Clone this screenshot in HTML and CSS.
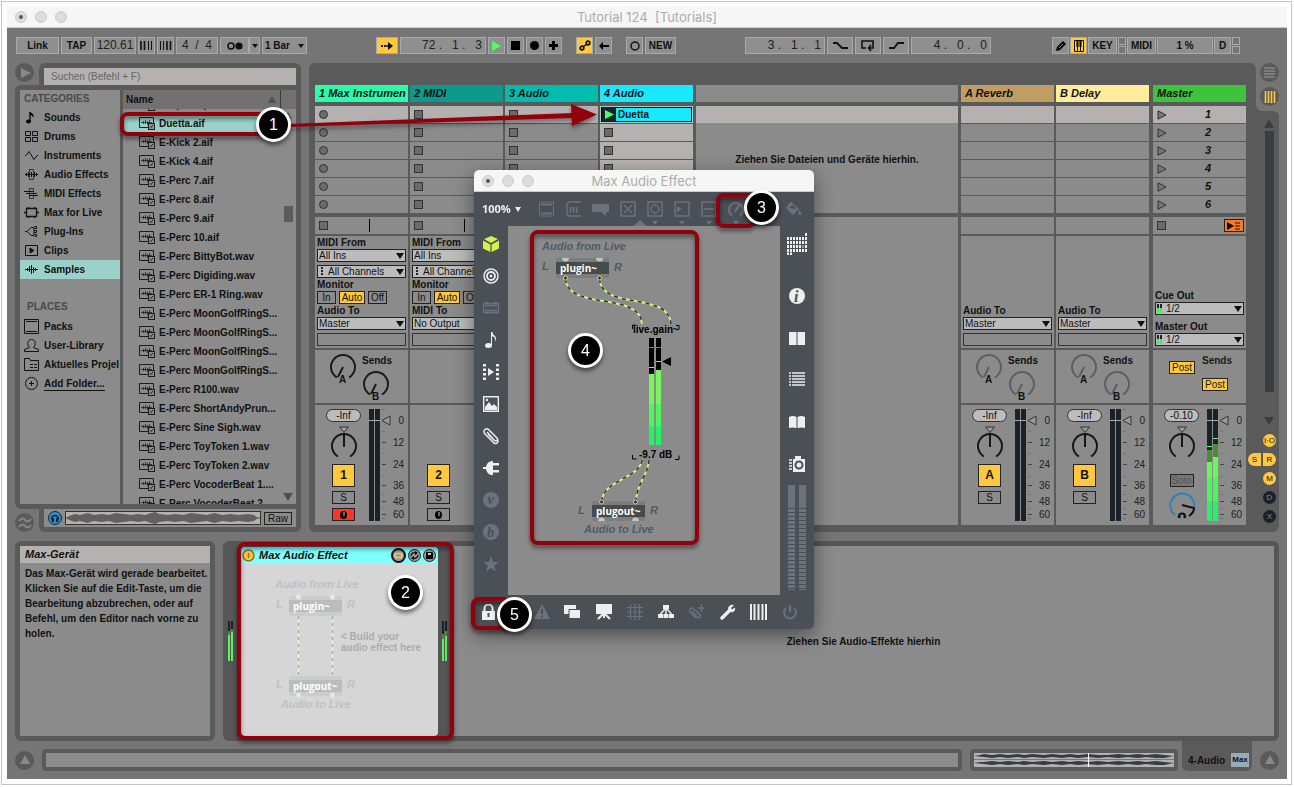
FILE: index.html
```html
<!DOCTYPE html>
<html lang="de">
<head>
<meta charset="utf-8">
<title>Tutorial 124 [Tutorials]</title>
<link rel="stylesheet" href="styles.css">
</head>
<body>
<svg class="defs" aria-hidden="true">
  <symbol id="file" viewBox="0 0 16 13"><path d="M9 10.500H.5V.5h14V6" fill="none" stroke="#1c1c1c"/><path d="M2 5.500h11M4.500 4v3M6.500 3v4M8.500 4v4M10.500 3v3" fill="none" stroke="#1c1c1c" stroke-opacity=".75"/><rect x="9.500" y="6.500" width="6" height="6" fill="#8b8b8b" fill-opacity=".8" stroke="#1c1c1c"/><path d="M11 9.500l1 1 2-2.500" fill="none" stroke="#1c1c1c"/></symbol>
  <symbol id="sends" viewBox="0 0 93 53"><g fill="none" stroke="currentColor" stroke-width="2"><path d="M22 27.500A12 12 0 1 1 34 27.500M28 17l-5 10M55 44.500A12 12 0 1 1 67 44.500M61 34l-5 10"/></g><g class="svg-label"><text x="24" y="33">A</text><text x="57" y="50">B</text><text x="47" y="14">Sends</text></g></symbol>
  <symbol id="pan" viewBox="0 0 30 34"><path d="M10.500 1h9L15 6.500z" fill="#999" stroke="#333"/><path d="M9 30.500a12 12 0 1 1 12 0M15 8v13" fill="none" stroke="#161616" stroke-width="2"/></symbol>
  <symbol id="scale" viewBox="0 0 38 112"><path d="M0 0h5v112H0zM6 0h5v112H6z" fill="#1a2128"/><path d="M0 11.500h11" stroke="#aaa"/><path d="M13 11.500l8-4.500v9z" fill="#999" stroke="#333"/><path d="M13 33.500h4M13 55.500h4M13 76.500h4M13 92.500h4M13 105.500h4" stroke="#444"/><path d="M13 .5h3M13 22.500h3M13 44.500h3M13 67.500h3M13 85.500h3M13 99.500h3M13 109.500h3" stroke="#707070"/><g class="scale-text" text-anchor="end"><text x="35" y="15">0</text><text x="35" y="37">12</text><text x="35" y="59">24</text><text x="35" y="80">36</text><text x="35" y="96">48</text><text x="35" y="109">60</text></g></symbol>
  <symbol id="scene" viewBox="0 0 10 10"><path d="M1 .8L9 5 1 9.200z" fill="#777" stroke="#333"/></symbol>
</svg>
<div class="page">
<div class="stage">
<div class="window">
  <header class="titlebar"><span class="dots"><i class="dot edited"></i><i class="dot"></i><i class="dot"></i></span><span>Tutorial 124 &nbsp;[Tutorials]</span></header>

  <div class="toolbar">
    <div class="group">
      <button class="tb w43">Link</button><button class="tb w31">TAP</button><button class="tb w42 num">120.61</button>
      <button class="tb w17"><svg width="13" height="9"><path d="M1 0v9M4.500 0v9" stroke="#111" stroke-width="1.600"/><path d="M8.500 0v9M11.500 0v9" stroke="#111"/></svg></button>
      <button class="tb w17"><svg width="13" height="9"><path d="M1.500 0v9M4.500 0v9" stroke="#111"/><path d="M8 0v9M11.500 0v9" stroke="#111" stroke-width="1.600"/></svg></button>
      <button class="tb w42 num">4 &nbsp;/ &nbsp;4</button>
      <span class="pair"><button class="tb w29"><svg width="16" height="8"><circle cx="4" cy="4" r="3" fill="none" stroke="#111" stroke-width="1.500"/><circle cx="12" cy="4" r="3.600" fill="#111"/></svg></button><button class="tb w11"><i class="down"></i></button></span>
      <button class="tb w45">1 Bar <i class="down"></i></button>
    </div>
    <div class="group">
      <button class="tb w22 on"><svg width="12" height="8"><path d="M0 3h2v2H0zM3 3h1v2H3zM7 0l5 4-5 4z" fill="#111"/><path d="M4 4h4" stroke="#111" stroke-width="1.500"/></svg></button>
      <button class="tb w86 num right">72 . &nbsp; 1 . &nbsp; 3</button>
      <button class="tb w17"><svg width="9" height="10"><path d="M0 0l9 5-9 5z" fill="#4dff6a"/></svg></button>
      <button class="tb w17"><svg width="9" height="9"><path d="M0 0h9v9H0z"/></svg></button>
      <button class="tb w17"><svg width="9" height="9"><circle cx="4.500" cy="4.500" r="4.500"/></svg></button>
      <button class="tb w17"><svg width="9" height="9"><path d="M3 0h3v3h3v3H6v3H3V6H0V3h3z"/></svg></button>
      <span class="spacer"></span>
      <button class="tb w17 on"><svg width="12" height="11"><g fill="none" stroke="#111" stroke-width="1.700"><circle cx="3" cy="8" r="1.800"/><circle cx="9" cy="3" r="1.800"/></g><path d="M4.500 6.500l3-2" stroke="#111" stroke-width="1.500"/></svg></button>
      <button class="tb w17"><svg width="10" height="8"><path d="M0 4l4-4v3h6v2H4v3z"/></svg></button>
      <span class="spacer"></span>
      <button class="tb w17"><svg width="10" height="10"><circle cx="5" cy="5" r="4" fill="none" stroke="#111" stroke-width="1.500"/></svg></button>
      <button class="tb w31">NEW</button>
    </div>
    <div class="group">
      <button class="tb w80 num right">3 . &nbsp; 1 . &nbsp; 1</button>
      <button class="tb w26"><svg width="15" height="7"><path d="M0 1h4l5 5h6" fill="none" stroke="#111" stroke-width="1.800"/></svg></button>
      <button class="tb w26"><svg width="14" height="12"><path d="M5 8H1V1h11v7H8M10 5L7.500 8l2.500 3" fill="none" stroke="#111" stroke-width="1.600"/></svg></button>
      <button class="tb w26"><svg width="15" height="7"><path d="M0 6h5l4-5h6" fill="none" stroke="#111" stroke-width="1.800"/></svg></button>
      <button class="tb w80 num right">4 . &nbsp; 0 . &nbsp; 0</button>
    </div>
    <div class="group tight">
      <button class="tb w17"><svg width="10" height="10"><path d="M0 10l1-4 6-6 3 3-6 6z"/><path d="M3 7l4-4" stroke="#999"/></svg></button>
      <button class="tb w17 on"><svg width="10" height="12"><path d="M.5.5h9v11h-9zM3.500 6v5M6.500 6v5" fill="none" stroke="#111"/><path d="M2.500 0h2v7h-2zM5.500 0h2v7h-2z"/></svg></button>
      <button class="tb w29">KEY</button><span class="leds"><i></i><i></i></span>
      <button class="tb w29">MIDI</button><button class="tb w56">1 %</button><button class="tb w17">D</button><span class="leds"><i></i><i></i></span>
    </div>
  </div>

  <main class="main">
    <section class="browser">
      <button class="round"><svg width="12" height="12"><path d="M2 1l10 5-10 5z" fill="#888"/></svg></button>
      <div class="search"><input type="text" aria-label="Suchen" placeholder="Suchen (Befehl + F)"></div>
      <div class="panes">
        <nav class="places">
          <h2>CATEGORIES</h2>
          <a href="#"><svg width="15" height="15"><path d="M6 2v9" stroke="#111" stroke-width="1.500"/><ellipse cx="4.500" cy="11.500" rx="2.500" ry="2"/><path d="M6 1c1 3 5 2 3 7 0-3-3-3-3-4z"/></svg>Sounds</a>
          <a href="#"><svg width="15" height="13" fill="none" stroke="#111"><path d="M1.500 1.500h5v4h-5zM8.500 1.500h5v4h-5zM1.500 7.500h5v4h-5zM8.500 7.500h5v4h-5z"/></svg>Drums</a>
          <a href="#"><svg width="15" height="13" fill="none" stroke="#111"><path d="M1 6.500h1l3-4 5 8 3-4h1"/></svg>Instruments</a>
          <a href="#"><svg width="15" height="13" fill="none" stroke="#111"><path d="M1 6.500h13M2.500 5v3M4.500 4v5M7.500 4v5M10.500 4v5M12.500 5v3"/><path d="M5.500 1.500h4v10h-4z" stroke-opacity=".7"/></svg>Audio Effects</a>
          <a href="#"><svg width="15" height="13" fill="none" stroke="#111"><path d="M0 4.500h9M2 6.500h11M5 8.500h9"/><path d="M5.500 1.500h4v10h-4z" stroke-opacity=".7"/></svg>MIDI Effects</a>
          <a href="#"><svg width="15" height="13" fill="none" stroke="#111" stroke-width="1.300"><path d="M2.500 2.500h10v8h-10zM0 6.500h2M13 6.500h2M4.500 1v1M10.500 1v1M4.500 11v1M10.500 11v1"/></svg>Max for Live</a>
          <a href="#"><svg width="15" height="13" fill="none" stroke="#111"><path d="M1 6.500h2l4-4h3v8H7l-4-4M10.500 1.500h2v2h-2M10.500 5.500h2v2h-2M10.500 9.500h2v2h-2"/></svg>Plug-Ins</a>
          <a href="#"><svg width="15" height="13" fill="none" stroke="#111"><path d="M1.500 1.500h12v10h-12z"/><path d="M6 4l4 2.500L6 9z" fill="#111"/></svg>Clips</a>
          <a href="#" class="current"><svg width="15" height="13" fill="none" stroke="#111"><path d="M1 6.500h13M3.500 5v3M5.500 3v6M7.500 2v9M9.500 4v6M11.500 5v3"/></svg>Samples</a>
          <h2 class="second">PLACES</h2>
          <a href="#"><svg width="15" height="15" fill="none" stroke="#111"><path d="M.5.5h14v14H.5zM2 2.500h11M2 12.500h11"/></svg>Packs</a>
          <a href="#"><svg width="15" height="15" fill="none" stroke="#111"><path d="M.5 13.500v-2l5-2c-3-3-2-8 2-8s5 5 2 8l5 2v2z"/></svg>User-Library</a>
          <a href="#"><svg width="15" height="13" fill="none" stroke="#111"><path d="M.5 12.500V.5h5l1 2h8v10zM6 6.500h3M10 6.500h3M6 9.500h3M10 9.500h3"/></svg>Aktuelles Projel</a>
          <a href="#"><svg width="15" height="15" fill="none" stroke="#111"><circle cx="7.500" cy="7.500" r="6"/><path d="M5 7.500h5M7.500 5v5"/></svg><span class="link">Add Folder...</span></a>
        </nav>
        <div class="files">
          <div class="files-head"><span>Name</span><i class="up"></i><b></b></div>
          <div class="files-body">
            <ul>
              <li><svg width="16" height="13"><use href="#file"/></svg>Drop Loop.aif</li>
              <li class="current"><svg width="16" height="13"><use href="#file"/></svg>Duetta.aif</li>
              <li><svg width="16" height="13"><use href="#file"/></svg>E-Kick 2.aif</li>
              <li><svg width="16" height="13"><use href="#file"/></svg>E-Kick 4.aif</li>
              <li><svg width="16" height="13"><use href="#file"/></svg>E-Perc 7.aif</li>
              <li><svg width="16" height="13"><use href="#file"/></svg>E-Perc 8.aif</li>
              <li><svg width="16" height="13"><use href="#file"/></svg>E-Perc 9.aif</li>
              <li><svg width="16" height="13"><use href="#file"/></svg>E-Perc 10.aif</li>
              <li><svg width="16" height="13"><use href="#file"/></svg>E-Perc BittyBot.wav</li>
              <li><svg width="16" height="13"><use href="#file"/></svg>E-Perc Digiding.wav</li>
              <li><svg width="16" height="13"><use href="#file"/></svg>E-Perc ER-1 Ring.wav</li>
              <li><svg width="16" height="13"><use href="#file"/></svg>E-Perc MoonGolfRingS...</li>
              <li><svg width="16" height="13"><use href="#file"/></svg>E-Perc MoonGolfRingS...</li>
              <li><svg width="16" height="13"><use href="#file"/></svg>E-Perc MoonGolfRingS...</li>
              <li><svg width="16" height="13"><use href="#file"/></svg>E-Perc MoonGolfRingS...</li>
              <li><svg width="16" height="13"><use href="#file"/></svg>E-Perc R100.wav</li>
              <li><svg width="16" height="13"><use href="#file"/></svg>E-Perc ShortAndyPrun...</li>
              <li><svg width="16" height="13"><use href="#file"/></svg>E-Perc Sine Sigh.wav</li>
              <li><svg width="16" height="13"><use href="#file"/></svg>E-Perc ToyToken 1.wav</li>
              <li><svg width="16" height="13"><use href="#file"/></svg>E-Perc ToyToken 2.wav</li>
              <li><svg width="16" height="13"><use href="#file"/></svg>E-Perc VocoderBeat 1....</li>
              <li><svg width="16" height="13"><use href="#file"/></svg>E-Perc VocoderBeat 2....</li>
            </ul>
            <div class="scroll"><i class="up"></i><b></b><i class="down big"></i></div>
          </div>
        </div>
      </div>
      <button class="round bottom"><svg width="14" height="12" fill="none" stroke="#888" stroke-width="2"><path d="M1 4c2-3 4-3 6-1s4 2 6-1M1 10c2-3 4-3 6-1s4 2 6-1"/></svg></button>
      <div class="preview">
        <svg width="14" height="14"><circle cx="7" cy="7" r="6.500" fill="#2b8fc9" stroke="#1b2733"/><path d="M3.500 8a3.500 3.500 0 1 1 7 0" fill="none" stroke="#10202c" stroke-width="1.500"/><path d="M3 7h3v4H4zM8 7h3l-1 4H8z" fill="#10202c"/></svg>
        <div class="wave"><svg viewBox="0 0 196 12" preserveAspectRatio="none"><path d="M0 6h196" stroke="#555"/><path d="M0 6L3 4 9 2 14 3 22 1 28 3 36 2 44 3 50 1 58 2 66 3 73 2 80 3 86 1 90 0 94 2 103 3 110 2 119 3 126 1 134 2 142 3 150 1 158 3 166 2 174 3 184 2 190 3 194 6 190 9 184 10 174 9 166 10 158 9 150 11 142 9 134 10 126 11 119 9 110 10 103 9 94 10 90 12 86 11 80 9 73 10 66 9 58 10 50 11 44 9 36 10 28 9 22 11 14 9 9 10 3 8z" fill="#606060"/></svg></div>
        <button class="outline raw">Raw</button>
      </div>
    </section>

    <section class="session">
      <div class="tracks">
        <article class="track">
          <h3 class="c-green">1 Max Instrumen</h3>
          <div class="slots"><button class="slot lit"><i class="rec"></i></button><button class="slot"><i class="rec"></i></button><button class="slot"><i class="rec"></i></button><button class="slot"><i class="rec"></i></button><button class="slot"><i class="rec"></i></button><button class="slot"><i class="rec"></i></button></div>
          <div class="stop"><i class="sq"></i><i class="tick"></i></div>
          <div class="io">
            <label for="t1from">MIDI From</label><span class="sel"><select id="t1from"><option>All Ins</option></select></span>
            <span class="sel chan"><select aria-label="Kanal 1"><option>All Channels</option></select></span>
            <span class="cap">Monitor</span><div class="mon"><button class="outline w19">In</button><button class="outline w26 on">Auto</button><button class="outline w19">Off</button></div>
            <label for="t1to">Audio To</label><span class="sel"><select id="t1to"><option>Master</option></select></span><span class="blank"></span>
          </div>
          <div class="sends"><svg width="93" height="53"><use href="#sends"/></svg></div>
          <div class="mixer"><div class="strip"><span class="pill">-Inf</span><svg width="30" height="34"><use href="#pan"/></svg><button class="act on">1</button><button class="outline w23">S</button><button class="outline w23 armed"><svg width="7" height="8"><ellipse cx="3.500" cy="4" rx="3.500" ry="4"/><path d="M4 1v4" stroke="#ccc"/></svg></button></div><svg width="38" height="112"><use href="#scale"/></svg></div>
        </article>
        <article class="track">
          <h3 class="c-teal">2 MIDI</h3>
          <div class="slots"><button class="slot lit"><i class="sq"></i></button><button class="slot"><i class="sq"></i></button><button class="slot"><i class="sq"></i></button><button class="slot"><i class="sq"></i></button><button class="slot"><i class="sq"></i></button><button class="slot"><i class="sq"></i></button></div>
          <div class="stop"><i class="sq"></i><i class="tick"></i></div>
          <div class="io">
            <label for="t2from">MIDI From</label><span class="sel"><select id="t2from"><option>All Ins</option></select></span>
            <span class="sel chan"><select aria-label="Kanal 2"><option>All Channels</option></select></span>
            <span class="cap">Monitor</span><div class="mon"><button class="outline w19">In</button><button class="outline w26 on">Auto</button><button class="outline w19">Off</button></div>
            <label for="t2to">MIDI To</label><span class="sel"><select id="t2to"><option>No Output</option></select></span><span class="blank"></span>
          </div>
          <div class="sends"></div>
          <div class="mixer"><div class="strip bare"><button class="act on">2</button><button class="outline w23">S</button><button class="outline w23"><svg width="7" height="8"><ellipse cx="3.500" cy="4" rx="3.500" ry="4"/><path d="M4 1v4" stroke="#ccc"/></svg></button></div></div>
        </article>
        <article class="track">
          <h3 class="c-aqua">3 Audio</h3>
          <div class="slots"><button class="slot lit"><i class="sq"></i></button><button class="slot"><i class="sq"></i></button><button class="slot"><i class="sq"></i></button><button class="slot"><i class="sq"></i></button><button class="slot"><i class="sq"></i></button><button class="slot"><i class="sq"></i></button></div>
          <div class="stop"><i class="sq"></i></div><div class="io"></div><div class="sends"></div><div class="mixer"></div>
        </article>
        <article class="track">
          <h3 class="c-cyan">4 Audio</h3>
          <div class="slots"><button class="slot clip"><span><svg width="9" height="9"><path d="M0 0l9 4.500L0 9z" fill="#4dff6a"/></svg></span>Duetta</button><button class="slot lit"><i class="sq"></i></button><button class="slot lit"><i class="sq"></i></button><button class="slot lit"><i class="sq"></i></button><button class="slot lit"><i class="sq"></i></button><button class="slot lit"><i class="sq"></i></button></div>
          <div class="stop"><i class="sq"></i></div><div class="io"></div><div class="sends"></div><div class="mixer"></div>
        </article>
        <div class="drop"><div class="drop-head"></div><div class="drop-lit"></div><div class="drop-mid">Ziehen Sie Dateien und Geräte hierhin.</div><div class="drop-rest"></div></div>
        <article class="track">
          <h3 class="c-tan">A Reverb</h3>
          <div class="slots"><div class="slot lit"></div><div class="slot"></div><div class="slot"></div><div class="slot"></div><div class="slot"></div><div class="slot"></div></div>
          <div class="stop"></div>
          <div class="io"><label for="ato">Audio To</label><span class="sel"><select id="ato"><option>Master</option></select></span><span class="blank"></span></div>
          <div class="sends dim"><svg width="93" height="53"><use href="#sends"/></svg></div>
          <div class="mixer"><div class="strip"><span class="pill">-Inf</span><svg width="30" height="34"><use href="#pan"/></svg><button class="act on">A</button><button class="outline w23">S</button></div><svg width="38" height="112"><use href="#scale"/></svg></div>
        </article>
        <article class="track">
          <h3 class="c-cream">B Delay</h3>
          <div class="slots"><div class="slot lit"></div><div class="slot"></div><div class="slot"></div><div class="slot"></div><div class="slot"></div><div class="slot"></div></div>
          <div class="stop"></div>
          <div class="io"><label for="bto">Audio To</label><span class="sel"><select id="bto"><option>Master</option></select></span><span class="blank"></span></div>
          <div class="sends dim"><svg width="93" height="53"><use href="#sends"/></svg></div>
          <div class="mixer"><div class="strip"><span class="pill">-Inf</span><svg width="30" height="34"><use href="#pan"/></svg><button class="act on">B</button><button class="outline w23">S</button></div><svg width="38" height="112"><use href="#scale"/></svg></div>
        </article>
        <article class="track master">
          <h3 class="c-master">Master</h3>
          <div class="slots"><button class="slot lit scene"><svg width="10" height="10"><use href="#scene"/></svg>1</button><button class="slot scene"><svg width="10" height="10"><use href="#scene"/></svg>2</button><button class="slot scene"><svg width="10" height="10"><use href="#scene"/></svg>3</button><button class="slot scene"><svg width="10" height="10"><use href="#scene"/></svg>4</button><button class="slot scene"><svg width="10" height="10"><use href="#scene"/></svg>5</button><button class="slot scene"><svg width="10" height="10"><use href="#scene"/></svg>6</button></div>
          <div class="stop"><i class="sq"></i><button class="back"><svg width="14" height="8"><path d="M0 0l7 4-7 4z"/><path d="M8 1h5M8 4h5M8 7h5" stroke="#111"/></svg></button></div>
          <div class="io wide">
            <label for="cue">Cue Out</label><span class="sel meter"><select id="cue"><option>1/2</option></select></span>
            <label for="mout">Master Out</label><span class="sel meter"><select id="mout"><option>1/2</option></select></span>
          </div>
          <div class="sends posts"><button class="outline w26 on">Post</button><div><span>Sends</span><button class="outline w26 on">Post</button></div></div>
          <div class="mixer"><div class="strip"><span class="pill">-0.10</span><svg width="30" height="34"><use href="#pan"/></svg><button class="outline solo">Solo</button><svg width="30" height="30"><path d="M8 24A12 12 0 1 1 27 17" fill="none" stroke="#2b83ba" stroke-width="2"/><path d="M15 14l12 3c0 4-2 6-5 8" fill="none" stroke="#111" stroke-width="2"/><path d="M12 27c-2-6 8-6 6 0M12.500 23v4M17.500 23v4" fill="none" stroke="#111" stroke-width="2"/></svg></div>
            <svg width="38" height="112"><use href="#scale"/><path d="M0 41h5v12H0zM6 35h5v13H6z" fill="#4f8a3a"/><path d="M0 53h5v15H0zM6 48h5v20H6z" fill="#6ef55c"/><path d="M0 68h5v24H0zM6 68h5v24H6z" fill="#49f85c"/><path d="M0 92h5v20H0zM6 92h5v20H6z" fill="#22f565"/><path d="M0 37.500h5M6 29.500h5" stroke="#5dff6a"/></svg></div>
        </article>
      </div>
    </section>
    <aside class="side">
      <div class="notch"><div>
        <button class="round"><svg width="11" height="11"><path d="M0 1h11M0 4h11M0 7h11M0 10h11" stroke="#888" stroke-width="1.500"/></svg></button>
        <button class="round"><svg width="12" height="12"><path d="M1.500 0v12M4.500 0v12M7.500 0v12M10.500 0v12" stroke="#ffc83e" stroke-width="1.600"/></svg></button>
      </div></div>
      <div class="rail">
        <i class="up dark"></i><b></b><i class="down big dark"></i>
        <div class="toggles"><button class="tog">I·O</button><span><button class="tog left">S</button><button class="tog rt">R</button></span><button class="tog">M</button><button class="tog off">D</button><button class="tog off">X</button></div>
      </div>
    </aside>
  </main>

  <section class="lower">
    <div class="info"><h2>Max-Gerät</h2><p>Das Max-Gerät wird gerade bearbeitet. Klicken Sie auf die Edit-Taste, um die Bearbeitung abzubrechen, oder auf Befehl, um den Editor nach vorne zu holen.</p></div>
    <div class="chain">
      <svg class="vu" width="5" height="40"><path d="M0 0h2v40H0zM3 0h2v40H3z" fill="#1a2128"/><path d="M0 10h2v6H0zM3 8h2v5H3z" fill="#4f8a3a"/><path d="M0 14h2v26H0zM3 11h2v29H3z" fill="#55f55e"/></svg>
      <div class="device">
        <header><svg width="13" height="13"><circle cx="6.500" cy="6.500" r="5.500" fill="#ffc83e" stroke="#9a6a20" stroke-width="1.500"/><path d="M6.500 4v5" stroke="#9a6a20" stroke-width="1.500"/></svg><h3>Max Audio Effect</h3>
          <button><svg width="15" height="15"><circle cx="7.500" cy="7.500" r="6.500" fill="#999" stroke="#111" stroke-width="2"/><path d="M4.500 5.500h6v4h-6zM3 7.500h1M11 7.500h1" fill="none" stroke="#ffc83e" stroke-width="1.400"/></svg></button>
          <button><svg width="13" height="13"><circle cx="6.500" cy="6.500" r="6" fill="#999" stroke="#222"/><path d="M3 7a3.500 3.500 0 0 1 5-3M10 6a3.500 3.500 0 0 1-5 3" fill="none" stroke="#111" stroke-width="1.300"/><path d="M7 2l3 2-3 2zM6 7l-3 2 3 2z"/></svg></button>
          <button><svg width="13" height="13"><circle cx="6.500" cy="6.500" r="6" fill="#999" stroke="#222"/><path d="M3 3h6l1 1v6H3z"/><path d="M5 4h3v2H5z" fill="#ccc"/></svg></button>
        </header>
        <svg class="patch-preview" viewBox="0 0 197 171" width="197" height="171">
          <g class="ghost-title"><text x="34" y="24">Audio from Live</text><text x="40" y="144">Audio to Live</text><text x="35" y="44">L</text><text x="106" y="44">R</text><text x="35" y="124">L</text><text x="106" y="124">R</text></g>
          <path d="M48 32h53v20H48zM48 112h53v20H48z" fill="#cbcccc"/><path d="M48 36h53v12H48zM48 116h53v12H48z" fill="#bbbdbd"/>
          <g fill="#e8e8e8"><circle cx="57.500" cy="33" r="2.500"/><circle cx="91.500" cy="33" r="2.500"/><circle cx="57.500" cy="131" r="2.500"/><circle cx="91.500" cy="131" r="2.500"/></g>
          <path d="M57.500 52v60M91.500 52v60" stroke="#e9ebcf" stroke-width="2"/><path d="M57.500 52v60M91.500 52v60" stroke="#aaa" stroke-width="1.500" stroke-dasharray="3 4"/>
          <g class="obj"><text x="52" y="46">plugin~</text><text x="52" y="126">plugout~</text></g>
          <g class="ghost"><text x="100" y="76">&lt; Build your</text><text x="100" y="87">audio effect here</text></g>
        </svg>
      </div>
      <svg class="vu" width="5" height="40"><path d="M0 0h2v40H0zM3 0h2v40H3z" fill="#1a2128"/><path d="M0 13h2v6H0zM3 10h2v6H3z" fill="#4f8a3a"/><path d="M0 18h2v22H0zM3 15h2v25H3z" fill="#55f55e"/></svg>
      <div class="fx-drop">Ziehen Sie Audio-Effekte hierhin</div>
    </div>
  </section>

  <footer class="status">
    <button class="round"><svg width="12" height="12"><path d="M6 1l5 9H1z" fill="#888"/></svg></button>
    <div class="message"></div>
    <div class="overview"><svg viewBox="0 0 200 14" preserveAspectRatio="none"><path d="M0 3L6 2 10 1 18 2 26 1 34 2 44 1 50 2 58 1 70 2 78 1 88 2 96 1 104 2 114 1 124 2 134 2 144 1 154 2 164 1 172 2 182 1 190 2 200 3 190 5 182 5 172 4 164 5 154 4 144 5 134 4 124 5 114 4 104 5 96 4 88 5 78 4 70 5 58 4 50 5 44 4 34 5 26 4 18 5 10 4zM0 10L6 9 10 9 18 8 26 9 34 8 44 9 50 8 58 9 70 8 78 9 88 8 96 9 104 8 114 9 124 8 134 9 144 8 154 9 164 8 172 9 182 8 190 9 200 10 190 12 182 12 172 11 164 12 154 11 144 12 134 11 124 12 114 11 104 12 96 11 88 12 78 11 70 12 58 11 50 12 44 11 34 12 26 11 18 12 10 11z" fill="#343c48"/><path d="M0 6.500h200" stroke="#777"/><path d="M114.500 0v14" stroke="#fff"/></svg></div>
    <div class="focus"><span>4-Audio</span><b>Max</b></div>
    <button class="round"><svg width="12" height="12"><path d="M6 1l5 9H1z" fill="#888"/></svg></button>
  </footer>
</div>

<section class="maxwin">
  <header class="titlebar"><span class="dots"><i class="dot edited"></i><i class="dot"></i><i class="dot"></i></span><span>Max Audio Effect</span></header>
  <div class="mtop">
    <button class="zoomer">100% <i class="down white"></i></button>
    <button><svg width="17" height="16" fill="none" stroke="currentColor"><path d="M1.500 1v14M15.500 1v14M1 1h15M1 15h15" stroke-width="1"/><path d="M3 3.500h11M3 12.500h11" stroke-width="2"/></svg></button>
    <button><svg width="16" height="16" fill="none" stroke="currentColor"><path d="M15 1H3L1 3v10l2 2h12" stroke-width="1.500"/><text x="3" y="12" class="ic-m">m</text></svg></button>
    <button><svg width="18" height="16"><path d="M0 3h17v8h-3v4l-5-4H0z" fill="currentColor"/></svg></button>
    <button><svg width="16" height="16" fill="none" stroke="currentColor" stroke-width="1.500"><path d="M1 1h14v14H1zM4 4l8 8M12 4l-8 8"/></svg></button>
    <button class="more"><svg width="16" height="16" fill="none" stroke="currentColor" stroke-width="1.500"><path d="M1 1h14v14H1z"/><circle cx="8" cy="8" r="4"/></svg></button>
    <button class="more"><svg width="16" height="16" fill="none" stroke="currentColor" stroke-width="1.500"><path d="M1 1h14v14H1z"/><path d="M3 5l5 3-5 3z" fill="currentColor" stroke="none"/></svg></button>
    <button class="more"><svg width="16" height="16" fill="none" stroke="currentColor" stroke-width="1.500"><path d="M1 1h14v14H1zM3 8h10"/></svg></button>
    <button class="more"><svg width="16" height="16" fill="none" stroke="currentColor" stroke-width="2"><path d="M4 14.500A7 7 0 1 1 12 14.500M7 11l4-7"/></svg></button>
    <button class="more"><svg width="16" height="16"></svg></button>
    <button class="last"><svg width="17" height="16" fill="currentColor"><path d="M6 1l8 7-6 6-7-7zM14 9c3 3 3 5 1 5s-2-2-1-5z"/><path d="M3 4l4-3" stroke="currentColor"/><path d="M4 7l4-3 4 4z" fill="#4b4f56"/></svg></button>
  </div>
  <div class="mmid">
    <div class="mleft">
      <button class="lime"><svg width="16" height="16" fill="currentColor"><path d="M8 0l7 3-7 4-7-4zM0 4.500l7.400 4V16L0 12.500zM16 4.500l-7.400 4V16l7.400-3.500z"/></svg></button>
      <button><svg width="16" height="16" fill="none" stroke="currentColor"><circle cx="8" cy="8" r="7" stroke-width="1.500"/><circle cx="8" cy="8" r="4" stroke-width="1.800"/><circle cx="8" cy="8" r="1" fill="currentColor"/></svg></button>
      <button class="off"><svg width="16" height="16" fill="none" stroke="currentColor"><path d="M.5 3.500h15v9H.5zM2 5.500h12M2 10.500h12M3.500 1.500v2M12.500 1.500v2M3.500 12v2M12.500 12v2" stroke-width="1.500"/></svg></button>
      <button><svg width="16" height="17" fill="currentColor"><ellipse cx="5.500" cy="13.500" rx="3.500" ry="2.500"/><path d="M8 0h1.500c0 4 6 4 2.500 10 1-4-1-5-3-6v10H8z"/></svg></button>
      <button><svg width="16" height="16" fill="currentColor"><path d="M0 0h3v2.500H0zM0 4.500h3V7H0zM0 9h3v2.500H0zM0 13.500h3V16H0zM13 0h3v2.500h-3zM13 4.500h3V7h-3zM13 9h3v2.500h-3zM13 13.500h3V16h-3zM5 4l6 4-6 4z"/></svg></button>
      <button><svg width="16" height="16"><path d="M.7.700h14.600v14.600H.7z" fill="none" stroke="currentColor" stroke-width="1.400"/><path d="M2 14v-3l4-5 3 4 2-2 3 3v3z" fill="currentColor"/><circle cx="4" cy="4" r="1.200" fill="currentColor"/></svg></button>
      <button><svg width="16" height="17" fill="none" stroke="currentColor" stroke-width="1.500"><path d="M4 4l7 8c2 2 5 0 3-2L6 2C3-1-1 3 2 6l8 8c2 3 7 1 4-3M5 6l6 6"/></svg></button>
      <button><svg width="16" height="16" fill="currentColor"><path d="M0 7h3c1-4 3-6 7-6v14c-4 0-6-2-7-6H0zM10 3h6v2.500h-6zM10 10h6v2.500h-6z"/></svg></button>
      <button class="off"><svg width="16" height="16"><circle cx="8" cy="8" r="8" fill="currentColor"/><text x="4.500" y="12" class="ic-v">v</text></svg></button>
      <button class="off"><svg width="16" height="16"><circle cx="8" cy="8" r="8" fill="currentColor"/><text x="4" y="13" class="ic-v">b</text></svg></button>
      <button class="off"><svg width="16" height="16"><path d="M8 0l2 6h6l-5 3.500 2 6L8 12l-5 3.500 2-6L0 6h6z" fill="currentColor"/></svg></button>
    </div>
    <svg class="patcher" viewBox="0 0 272 369" width="272" height="369">
      <g class="ptitle"><text x="34" y="24">Audio from Live</text><text x="76" y="307">Audio to Live</text><text x="34" y="44">L</text><text x="106" y="45">R</text><text x="70" y="288">L</text><text x="142" y="288">R</text></g>
      <path d="M48 32h53v20H48zM84 275h53v20H84z" fill="#7d7d7d"/><path d="M48 36h53v12H48zM84 279h53v12H84z" fill="#464b4b"/>
      <g fill="#c4c4c4"><path d="M54 32h7a3.500 3.500 0 0 1-7 0zM88 32h7a3.500 3.500 0 0 1-7 0zM90 295h7a3.500 3.500 0 0 0-7 0zM124 295h7a3.500 3.500 0 0 0-7 0z"/></g>
      <g fill="none" stroke="#cdf08a" stroke-width="2"><path d="M57.500 53C60 85 132 65 134 98M91.500 53C94 85 161 65 163 98M134 234c-2 18-38 20-40 40M141 234c0 12-12 24-13 40"/></g>
      <g fill="none" stroke="#333" stroke-width="1.600" stroke-dasharray="4 4"><path d="M57.500 53C60 85 132 65 134 98M91.500 53C94 85 161 65 163 98M134 234c-2 18-38 20-40 40M141 234c0 12-12 24-13 40"/></g>
      <g fill="#333" stroke="#c9e080"><circle cx="57.500" cy="52" r="2"/><circle cx="91.500" cy="52" r="2"/></g><g fill="#333" stroke="#d8c0c0"><circle cx="93.500" cy="276" r="2"/><circle cx="127.500" cy="276" r="2"/></g>
      <g class="obj"><text x="52" y="46">plugin~</text><text x="88" y="289">plugout~</text></g>
      <g class="plabel"><text x="125" y="107">live.gain~</text><text x="131" y="232">-9.7 dB</text></g>
      <path d="M124.500 103v-4h3M168 99.500h3v4M124.500 229v4h4M167 233.500h4v-4" fill="none" stroke="#000"/>
      <path d="M141 112h5v36h-5zM148 112h5v32h-5zM154 135.500l9-4.500v9z"/><path d="M141 121.500h12" stroke="#777"/>
      <path d="M141 148h5v30h-5zM148 144h5v34h-5z" fill="#78f55d"/><path d="M141 178h5v22h-5zM148 178h5v22h-5z" fill="#4ff55a"/><path d="M141 200h5v19h-5zM148 200h5v19h-5z" fill="#22f565"/><path d="M141 141.500h5M148 135.500h5" stroke="#7dff70"/>
    </svg>
    <div class="mright">
      <button class="grid"><svg width="21" height="22"><path d="M0 5.500h18M0 9.500h18M0 13.500h18M0 17.500h18" stroke="currentColor" stroke-width="3" stroke-dasharray="2 1"/><path d="M0 21h2M3 21h2M18 1.500h2M18 5.500h2M18 9.500h2M18 13.500h2M18 17.500h2" stroke="currentColor" stroke-width="3"/><path d="M15 12h2v3h-2z" fill="#f5792b"/></svg></button>
      <button><svg width="16" height="16"><circle cx="8" cy="8" r="8" fill="currentColor"/><text x="5" y="14" class="ic-i">i</text></svg></button>
      <button><svg width="16" height="13" fill="currentColor"><path d="M0 0h7.500v13H0zM8.500 0H16v13H8.500z"/></svg></button>
      <button><svg width="16" height="16"><path d="M0 1h2M0 4h2M0 7h2M0 10h2M0 13h2M3 1h13M3 4h13M3 7h13M3 10h13M3 13h13" stroke="currentColor" stroke-width="1.600"/></svg></button>
      <button><svg width="16" height="13" fill="currentColor"><path d="M0 1q4-2 7.500 0v11q-4-1-7.500 0zM8.500 1q4-2 7.500 0v11q-4-1-7.500 0z"/></svg></button>
      <button><svg width="16" height="16"><path d="M4 3h2V0h6v3h4v13H4z" fill="currentColor"/><path d="M0 4h3M0 7h3M0 10h3M0 13h3" stroke="currentColor" stroke-width="1.500"/><circle cx="10" cy="9" r="3.500" fill="none" stroke="#4b4f56" stroke-width="2"/></svg></button>
      <div class="mmeter"><i></i><i></i></div>
    </div>
  </div>
  <div class="mbottom">
    <button class="lock"><svg width="13" height="17"><path d="M0 7h13v9H0z" fill="currentColor"/><path d="M2.500 8V4.500a4 4 0 0 1 8 0V8" fill="none" stroke="currentColor" stroke-width="2"/><path d="M6.500 9v4" stroke="#4b4f56" stroke-width="2"/></svg></button>
    <button class="off"><svg width="16" height="16"><path d="M8 0l8 15H0z" fill="currentColor"/><path d="M8 5v5M8 11.500v2" stroke="#4b4f56" stroke-width="2"/></svg></button>
    <button><svg width="17" height="14"><path d="M0 0h12v9H0z" fill="currentColor"/><path d="M5 4.500h11.500v9H5z" fill="currentColor" stroke="#4b4f56"/></svg></button>
    <button><svg width="16" height="16"><path d="M0 0h16v10H0z" fill="currentColor"/><path d="M8 9l-6 6M8 9l6 6M8 9v5" stroke="currentColor" stroke-width="2"/></svg></button>
    <button class="off"><svg width="16" height="16"><path d="M0 3.500h16M0 8h16M0 12.500h16M3.500 0v16M8 0v16M12.500 0v16" stroke="currentColor" stroke-width="1.200"/></svg></button>
    <button><svg width="16" height="14" fill="currentColor"><path d="M5 0h6v4H5zM0 9h5v4H0zM5.500 9h5v4h-5zM11 9h5v4h-5z"/><path d="M7 4L2.500 9M8 4v5M9 4l4.500 5" stroke="currentColor" stroke-width="1.500"/></svg></button>
    <button class="off"><svg width="16" height="16" fill="none" stroke="currentColor" stroke-width="1.500"><path d="M3 7l5 6c2 2 4 0 3-2L5 5C3 3-1 5 1 8l6 6M9 4h7M12.500 0v8"/></svg></button>
    <button><svg width="16" height="16"><path d="M2 14l7-7" stroke="currentColor" stroke-width="3.500" stroke-linecap="round"/><path d="M8 5c0-3 3-5 6-4l-3 3 1 1.500 3-2c1 4-3 6-6 4z" fill="currentColor"/></svg></button>
    <button><svg width="17" height="16"><path d="M1 0v16M4.500 0v16M8.500 0v16M12.500 0v16M16 0v16" stroke="currentColor" stroke-width="2"/></svg></button>
    <button class="off"><svg width="16" height="16" fill="none" stroke="currentColor" stroke-width="2"><path d="M4 4a6 6 0 1 0 8 0M8 1v7"/></svg></button>
  </div>
</section>

<svg class="arrow" width="310" height="24"><path d="M0 20l284-11v5L0 23z" fill="#92000d"/><path d="M282 0l26 10.500L283 22z" fill="#92000d"/></svg>
<i class="mark m1"></i><i class="mark m2"></i><i class="mark m3"></i><i class="mark m4"></i><i class="mark m5"></i>
<b class="pin p1">1</b><b class="pin p2">2</b><b class="pin p3">3</b><b class="pin p4">4</b><b class="pin p5">5</b>
</div>
</div>
</body>
</html>
```

FILE: styles.css
```css
* { box-sizing: border-box; }
body { margin: 0; background: #fff; font: bold 10px/13px "Liberation Sans", Arial, sans-serif; color: #111; }
button, input, select { font: inherit; color: inherit; margin: 0; padding: 0; border: 0; border-radius: 0; background: none; }
h2, h3, p, ul { margin: 0; padding: 0; font-size: inherit; }
svg { display: block; flex: none; }
a { color: inherit; text-decoration: none; }
.defs { position: absolute; width: 0; height: 0; }

.page { margin: 1px 2px 0 1px; border: 1px solid #c4c4c4; padding: 4px 4px 5px 5px; }
.stage { position: relative; }
.window { background: #757575; display: flex; flex-direction: column; }
.titlebar { position: relative; height: 22px; background: #f6f6f6; border-bottom: 1px solid #ccc; display: flex; align-items: center; justify-content: center; font: 13px/20px Inter, Roboto, sans-serif; color: #acacac; }
.dots { position: absolute; left: 8px; top: 5px; display: flex; gap: 8px; }
.dot { width: 12px; height: 12px; border-radius: 50%; background: #dcdcdc; border: 1px solid #ccc; display: flex; }
.edited::after { content: ""; width: 4px; height: 4px; margin: auto; border-radius: 50%; background: #555; }

.toolbar { display: flex; gap: 69px; padding: 9px 48px 9px 9px; }
.group, .pair { display: flex; gap: 2px; }
.group.tight { gap: 1px; margin-left: auto; }
.toolbar .tight { margin-left: -8px; }
.pair { gap: 0; }
.spacer { width: 10px; }
.tb { height: 17px; background: #8f8f8f; border: 1px solid #a9a9a9; display: flex; align-items: center; justify-content: center; gap: 8px; white-space: nowrap; }
.num { font-size: 12px; font-weight: normal; color: #222; }
.right { justify-content: flex-end; padding-right: 3px; }
.on { background: #ffc83e; }
.leds { display: grid; gap: 1px; }
.leds i { width: 8px; height: 8px; border: 1px solid #a9a9a9; }
.down { width: 0; height: 0; border: 3px solid transparent; border-top: 4px solid #111; border-bottom: 0; }
.down.big { border-width: 8px 5px 0; border-top-color: #4f4f4f; }
.down.white { border-top: 5px solid #eee; }
.up { width: 0; height: 0; border: 4px solid transparent; border-bottom: 7px solid #505050; border-top: 0; }
.w11 { width: 11px; } .w17 { width: 17px; } .w19 { width: 19px; } .w22 { width: 22px; } .w23 { width: 23px; } .w26 { width: 26px; } .w29 { width: 29px; } .w31 { width: 31px; } .w42 { width: 42px; } .w43 { width: 43px; } .w45 { width: 45px; } .w56 { width: 56px; } .w80 { width: 80px; } .w86 { width: 86px; }

.main { display: flex; padding: 0 8px; height: 469px; }
.round { width: 19px; height: 19px; border-radius: 50%; background: #5a5a5a; display: flex; align-items: center; justify-content: center; }
.browser { flex: none; width: 286px; display: grid; grid-template: 22px 1fr 23px / 24px 1fr; margin-right: 8px; }
.search { background: #5a5a5a; border-radius: 6px 6px 0 0; padding: 5px 5px 0; }
.search input { width: 100%; height: 17px; padding-left: 7px; background: #b5b1b0; font-weight: normal; }
.search input::placeholder { color: #666; }
.panes { grid-column: 1 / 3; background: #5a5a5a; border-radius: 6px 0 0 6px; padding: 5px; display: flex; gap: 3px; min-height: 0; }
.places { width: 100px; background: #8b8b8b; overflow: hidden; }
.places h2 { height: 18px; padding-left: 4px; line-height: 18px; color: #4a4a4a; }
.places h2.second { height: 19px; margin-top: 19px; padding-left: 7px; }
.places a { height: 19px; padding-left: 4px; display: flex; align-items: center; gap: 5px; white-space: nowrap; }
.places a.current, .files .current { background: #9bd1c9; }
.link { border-bottom: 1px solid #111; }
.files { flex: 1; min-width: 0; background: #8b8b8b; display: flex; flex-direction: column; }
.files-head { flex: none; height: 19px; background: #727070; display: flex; align-items: center; padding-left: 3px; }
.files-head span { flex: 1; }
.files-head b { width: 16px; height: 19px; margin-left: 4px; border-left: 1px solid #3a3a3a; }
.files-body { flex: 1; min-height: 0; display: flex; overflow: hidden; }
.files ul { flex: 1; list-style: none; margin-top: -14px; overflow: hidden; }
.files li { height: 19px; padding-left: 16px; display: flex; align-items: center; gap: 4px; white-space: nowrap; }
.scroll { width: 16px; display: flex; flex-direction: column; align-items: center; padding: 3px 0; }
.scroll b { width: 9px; height: 16px; margin-top: 87px; background: #5c5c5c; }
.scroll .big { margin-top: auto; }
.bottom { align-self: end; }
.preview { background: #8b8b8b; border: solid #5a5a5a; border-width: 0 5px 5px; border-radius: 0 0 6px 6px; display: flex; align-items: center; gap: 3px; padding: 0 4px; }
.wave { flex: 1; height: 14px; background: #b5b1b0; border: 1px solid #333; }
.wave svg, .overview svg { width: 100%; height: 100%; }
.outline { height: 13px; border: 1px solid #222; font-weight: normal; line-height: 11px; display: flex; align-items: center; justify-content: center; }
.raw { width: 28px; }

.session { flex: 1; min-width: 0; background: #5a5a5a; border-radius: 6px 6px 0 6px; padding: 22px 10px 7px 6px; }
.tracks { display: flex; gap: 2px; height: 100%; }
.track { width: 93px; flex: none; display: flex; flex-direction: column; }
.master { margin-left: 2px; }
.track h3 { height: 17px; padding: 0 4px; font: italic bold 11px/17px "Liberation Sans", Arial, sans-serif; white-space: nowrap; overflow: hidden; }
.c-green { background: #29ffa9; } .c-teal { background: #0b9a8c; } .c-aqua { background: #00bdb0; } .c-cyan { background: #19e9ff; }
.c-tan { background: #bf9d63; } .c-cream { background: #ffec9c; } .c-master { background: #3ec43c; }
.slots { display: flex; flex-direction: column; gap: 1px; margin: 4px 0; }
.slot { height: 17px; background: #8b8b8b; padding-left: 4px; display: flex; align-items: center; }
.lit, .drop-lit { background: #b5b1b0; }
.rec, .sq { width: 9px; height: 9px; background: #6b6b6b; border: 1px solid #333; }
.rec { border-radius: 50%; }
.clip { padding: 0 1px; background: #19e9ff; border: 1px solid #9bd1c9; box-shadow: inset 0 0 0 1px #000; gap: 2px; }
.clip span { width: 14px; height: 15px; background: #1a2128; display: flex; align-items: center; justify-content: center; }
.scene { font: italic bold 11px/17px "Liberation Sans", Arial, sans-serif; gap: 38px; }
.stop { height: 17px; background: #8b8b8b; padding: 0 2px 0 4px; display: flex; align-items: center; }
.tick { width: 1px; height: 13px; background: #000; margin-left: 41px; }
.back { width: 20px; height: 13px; margin-left: auto; background: #f57b28; border: 1px solid #222; display: flex; align-items: center; justify-content: center; }
.io { flex: 1; margin-top: 2px; background: #8b8b8b; padding: 0 2px 2px; display: flex; flex-direction: column; justify-content: flex-end; }
.io label, .cap { display: block; height: 13px; }
.sel { position: relative; display: block; height: 13px; }
.sel select { display: block; width: 100%; height: 13px; appearance: none; background: #bcbcbc; border: 1px solid #222; padding-left: 1px; font-weight: normal; line-height: 11px; }
.sel::after { content: ""; position: absolute; right: 2px; top: 4px; border: 4px solid transparent; border-top: 6px solid #111; border-bottom: 0; }
.chan { margin-top: 3px; }
.chan select, .meter select { padding-left: 10px; }
.chan::before { content: ""; position: absolute; left: 4px; top: 2px; width: 2px; height: 9px; background: repeating-linear-gradient(#222 0 2px, transparent 2px 3px); }
.meter::before { content: ""; position: absolute; left: 2px; top: 2px; width: 5px; height: 9px; background: linear-gradient(90deg, transparent 2px, #bcbcbc 2px 3px, transparent 3px), linear-gradient(#222 4px, #3cf060 4px); }
.wide .sel + label { margin-top: 5px; }
.mon { display: flex; gap: 3px; }
.blank { height: 13px; margin-top: 3px; border: 1px solid #333; }
.sends { height: 53px; margin-top: 2px; background: #8b8b8b; color: #1a1a1a; }
.dim { color: #5e5e5e; }
.svg-label { font-size: 10px; fill: #111; }
.scale-text { font-size: 10px; font-weight: normal; fill: #222; }
.posts { display: flex; gap: 7px; padding: 4px 0 0 16px; }
.posts > button { margin-top: 7px; }
.posts div > button { margin-top: 11px; }
.posts span { display: block; }
.mixer { height: 120px; margin-top: 2px; background: #8b8b8b; padding-top: 4px; display: flex; }
.strip { width: 54px; display: flex; flex-direction: column; align-items: center; gap: 4px; padding-left: 3px; }
.strip.bare { padding-top: 55px; }
.pill { width: 35px; height: 13px; border: 1px solid #333; border-radius: 7px; background: #bcbcbc; font-weight: normal; line-height: 11px; text-align: center; }
.act { width: 23px; height: 23px; border: 1px solid #222; font-size: 12px; font-weight: bold; }
.outline.armed { background: #ff3426; }
.solo { width: 24px; margin-top: 10px; color: #555; background: #777; }
.drop { flex: 1; display: flex; flex-direction: column; margin: 0 1px; }
.drop div { background: #8b8b8b; }
.drop .drop-head { height: 17px; margin-bottom: 4px; }
.drop .drop-lit { height: 17px; background: #b5b1b0; }
.drop-mid { height: 90px; text-align: center; padding-top: 30px; margin-bottom: 4px; white-space: nowrap; }
.drop-rest { flex: 1; }

.side { flex: none; width: 23px; display: flex; flex-direction: column; }
.notch { background: #5a5a5a; }
.notch > div { height: 48px; background: #757575; border-radius: 0 0 0 6px; padding-left: 4px; display: flex; flex-direction: column; gap: 5px; }
.rail { flex: 1; background: #5a5a5a; border-radius: 0 6px 6px 0; display: flex; flex-direction: column; align-items: flex-end; padding: 8px 3px 6px 0; }
.rail > b { width: 9px; height: 261px; margin: 3px 2px 25px; background: #3c3d3e; }
.rail > .up { border-width: 0 5px 9px; border-bottom-color: #3c3d3e; margin-right: 2px; }
.rail > .big { border-top-color: #3c3d3e; margin-right: 2px; }
.toggles { margin-top: 9px; display: flex; flex-direction: column; align-items: flex-end; gap: 6px; }
.toggles span { display: flex; gap: 2px; margin-left: -20px; }
.tog { width: 13px; height: 13px; border-radius: 50%; background: #ffc83e; font-size: 8px; line-height: 13px; font-weight: normal; }
.tog.left { border-radius: 7px 0 0 7px; }
.tog.rt { border-radius: 0 7px 7px 0; }
.tog.off { background: #1a2128; color: #888; }

.lower { display: flex; gap: 8px; padding: 9px 8px 0; height: 209px; }
.info { flex: none; width: 200px; border: 5px solid #5a5a5a; border-radius: 6px; background: #8b8b8b; }
.info h2 { height: 17px; padding-left: 5px; background: #b5b1b0; font: italic bold 11px/17px "Liberation Sans", Arial, sans-serif; }
.info p { padding: 3px 0 0 5px; line-height: 15px; }
.chain { flex: 1; display: flex; align-items: stretch; background: #565656; border-radius: 6px; padding: 5px; }
.vu { margin-top: 75px; }
.device { width: 197px; margin: 1px 4px 0 8px; background: #d6d6d6; border-radius: 4px; overflow: hidden; }
.device header { height: 17px; background: #80ffff; display: flex; align-items: center; gap: 2px; padding: 0 2px 0 1px; }
.device h3 { flex: 1; padding-left: 2px; font: italic bold 11px/17px "Liberation Sans", Arial, sans-serif; }
.ghost-title, .ptitle { font: italic bold 11px "Liberation Sans", Arial, sans-serif; fill: #c0c1c4; }
.ptitle { fill: #4d5b69; }
.ghost { font-size: 10px; fill: #acacac; }
.obj { font: bold 10px "Open Sans", "Noto Sans", sans-serif; fill: #fff; }
.plabel { font-size: 10px; fill: #000; }
.fx-drop { flex: 1; margin-left: 6px; background: #8b8b8b; display: flex; align-items: center; justify-content: center; }

.status { display: flex; align-items: center; padding: 0 8px; height: 38px; }
.message { flex: 1; height: 22px; margin: 0 8px; border: 4px solid #5a5a5a; border-radius: 4px; background: #8b8b8b; }
.overview { width: 208px; height: 22px; border: 4px solid #5a5a5a; border-radius: 4px; background: #b5b1b0; }
.focus { align-self: flex-start; width: 70px; height: 30px; margin: 0 8px 0 4px; padding: 8px 3px 0 6px; background: #5a5a5a; border-radius: 0 0 6px 6px; display: flex; align-items: center; justify-content: space-between; white-space: nowrap; }
.focus b { background: #9ab; width: 18px; font-size: 8px; line-height: 14px; text-align: center; }

.maxwin { position: absolute; left: 467px; top: 164px; width: 340px; height: 459px; border-radius: 5px; overflow: hidden; background: #4b4f56; color: #eee; display: flex; flex-direction: column; filter: drop-shadow(0 6px 10px rgba(0, 0, 0, .45)); }
.maxwin .titlebar { flex: none; }
.mtop { position: relative; height: 34px; padding: 9px 0 0 8px; display: flex; align-items: flex-start; }
.mtop button { width: 27px; color: #6d717a; display: flex; flex-direction: column; align-items: center; gap: 4px; }
.mtop .zoomer { width: 51px; height: 16px; flex-direction: row; gap: 4px; color: #eee; font: bold 11px/16px "Open Sans", "Noto Sans", sans-serif; }
.mtop .last { margin-left: 4px; }
.mtop::after { content: ""; position: absolute; left: 159px; bottom: 0; border: 7px solid transparent; border-bottom: 6px solid #6d717a; border-top: 0; }
.more::after { content: ""; border: 3px solid transparent; border-top: 4px solid #6d717a; border-bottom: 0; }
.mmid { flex: 1; min-height: 0; display: flex; }
.mmid button, .mbottom button { display: flex; align-items: center; justify-content: center; }
.mleft { width: 34px; padding-top: 2px; }
.mleft button { width: 34px; height: 32px; }
.off { color: #6d717a; }
.lime { color: #d3f04c; }
.patcher { flex: 1; background: #8b8b8b; }
.mright { width: 34px; display: flex; flex-direction: column; }
.mright button { flex: none; width: 34px; height: 42px; }
.mright .grid { height: 36px; margin-bottom: 13px; }
.mmeter { flex: 1; display: flex; justify-content: center; gap: 4px; padding: 0 0 5px; }
.mmeter i { width: 7px; background: linear-gradient(#6d717a 20px, transparent 20px), repeating-linear-gradient(#6d717a 0 3px, #4b4f56 3px 4px); }
.mbottom { height: 34px; display: flex; align-items: center; }
.mbottom button { width: 31px; height: 34px; }
.mbottom .lock { width: 28px; margin-right: 24px; }
.ic-m, .ic-v, .ic-i { font: italic bold 12px "Liberation Serif", serif; fill: #6d717a; stroke: none; }
.ic-v, .ic-i { fill: #4b4f56; }
.ic-v { font-size: 14px; }
.ic-i { font-size: 16px; }

.arrow { position: absolute; left: 282px; top: 98px; filter: drop-shadow(0 3px 2px rgba(0, 0, 0, .4)); }
.mark { position: absolute; border: 4px solid #92000d; border-radius: 8px; filter: drop-shadow(0 3px 2px rgba(0, 0, 0, .5)); }
.m1 { left: 113px; top: 106px; width: 156px; height: 24px; }
.m2 { left: 230px; top: 536px; width: 217px; height: 198px; }
.m3 { left: 709px; top: 187px; width: 40px; height: 35px; }
.m4 { left: 523px; top: 224px; width: 169px; height: 315px; }
.m5 { left: 464px; top: 591px; width: 40px; height: 33px; }
.pin { position: absolute; width: 35px; height: 35px; border: 3px solid #fff; border-radius: 50%; background: #000; color: #fff; font: 16px/29px "Liberation Sans", Arial, sans-serif; text-align: center; box-shadow: 0 3px 4px rgba(0, 0, 0, .5); }
.p1 { left: 249px; top: 101px; }
.p2 { left: 381px; top: 569px; }
.p3 { left: 737px; top: 184px; }
.p4 { left: 561px; top: 327px; }
.p5 { left: 490px; top: 591px; }
```
